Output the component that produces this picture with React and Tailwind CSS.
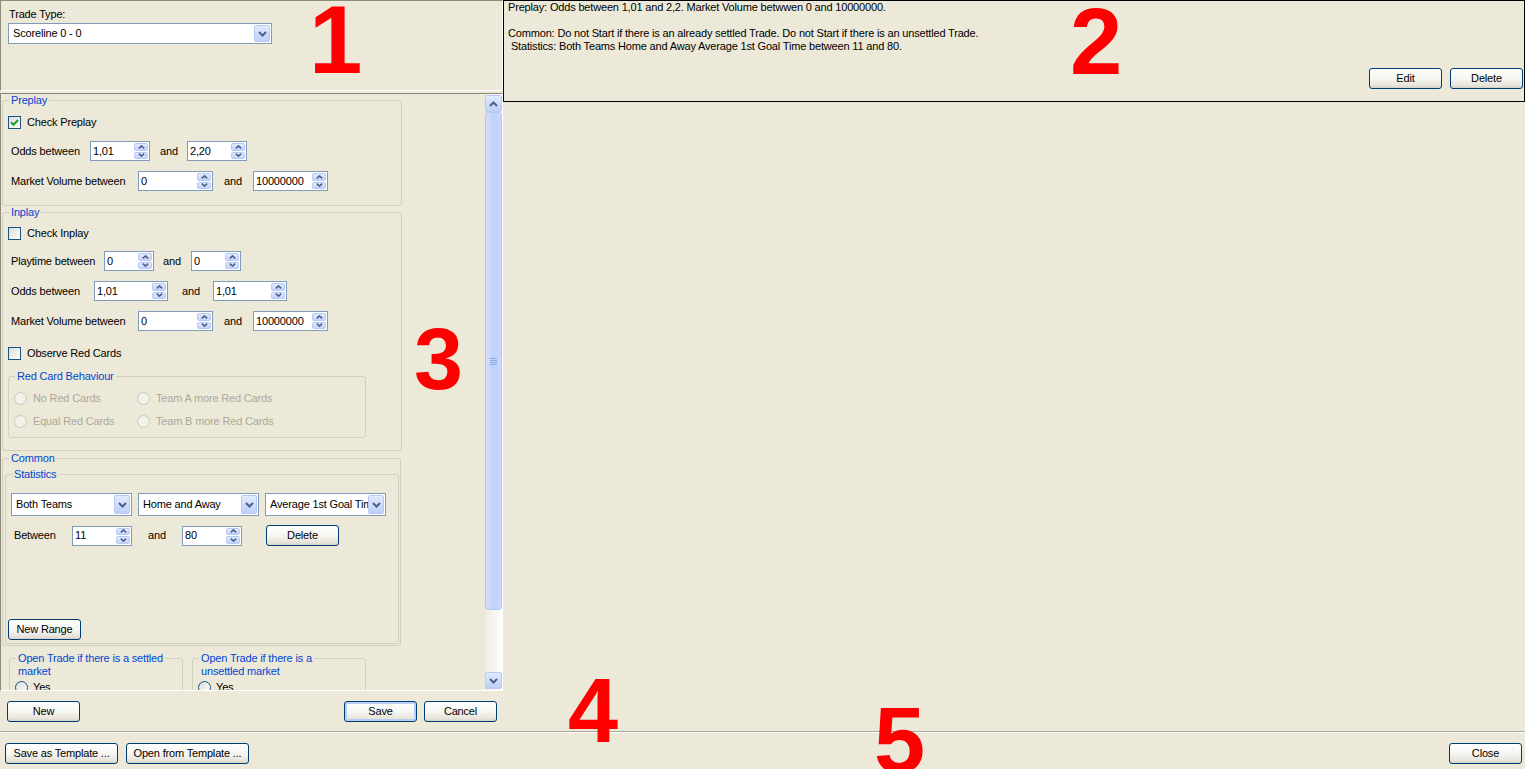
import React from "react";

function Chevron({ up = false }) {
  return (
    <svg width="9" height="6" viewBox="0 0 9 6" className="block">
      <path d={up ? "M1 5 L4.5 1.5 L8 5" : "M1 1 L4.5 4.5 L8 1"} fill="none" stroke="#4D6185" strokeWidth="2" />
    </svg>
  );
}

function SpinArrow({ up = false }) {
  return (
    <svg width="7" height="4" viewBox="0 0 7 4" className="block">
      <path d={up ? "M0.8 3.4 L3.5 0.9 L6.2 3.4" : "M0.8 0.6 L3.5 3.1 L6.2 0.6"} fill="none" stroke="#4D6185" strokeWidth="1.6" />
    </svg>
  );
}

function Spin({ value, className = "" }) {
  return (
    <div className={`flex h-[20px] border border-[#7F9DB9] bg-white ${className}`}>
      <span className="flex-1 min-w-0 pl-[2px] flex items-center overflow-hidden whitespace-nowrap">{value}</span>
      <div className="w-[16px] flex flex-col gap-[1px] p-[1px]">
        <div className="flex-1 rounded-[2px] border border-[#B7C9F6] bg-[linear-gradient(180deg,#E2EAFE,#C3D3FB)] flex items-center justify-center">
          <SpinArrow up />
        </div>
        <div className="flex-1 rounded-[2px] border border-[#B7C9F6] bg-[linear-gradient(180deg,#E2EAFE,#C3D3FB)] flex items-center justify-center">
          <SpinArrow />
        </div>
      </div>
    </div>
  );
}

function Combo({ text, className = "" }) {
  return (
    <div className={`flex border border-[#7F9DB9] bg-white p-[1px] ${className}`}>
      <span className="flex-1 min-w-0 pl-[3px] flex items-center overflow-hidden whitespace-nowrap">{text}</span>
      <div className="w-[16px] rounded-[2px] border border-[#B7C9F6] bg-[linear-gradient(180deg,#E2EAFE,#BDCFFA)] flex items-center justify-center">
        <Chevron />
      </div>
    </div>
  );
}

function Btn({ children, className = "", def = false }) {
  return (
    <button
      className={`h-[21px] rounded-[3px] border border-[#003C74] bg-[linear-gradient(180deg,#FFFFFF_0%,#F4F4F0_55%,#E6E3DA_88%,#D6D0C5_100%)] text-[11px] text-black flex items-center justify-center ${
        def ? "shadow-[inset_0_0_0_2px_#B9CDF8]" : ""
      } ${className}`}
    >
      {children}
    </button>
  );
}

function Check({ checked = false }) {
  return (
    <span className="w-[13px] h-[13px] border border-[#1C5180] bg-[linear-gradient(135deg,#DCDCD7,#FFFFFF)] flex items-center justify-center">
      {checked && (
        <svg width="9" height="9" viewBox="0 0 9 9">
          <path d="M1 4.3 L3.5 6.8 L8 2" fill="none" stroke="#21A121" strokeWidth="2" />
        </svg>
      )}
    </span>
  );
}

function Radio({ disabled = false }) {
  return disabled ? (
    <span className="w-[13px] h-[13px] rounded-full border border-[#CAC8BB] bg-[#F2F1EA]" />
  ) : (
    <span className="w-[13px] h-[13px] rounded-full border border-[#1C5180] bg-[linear-gradient(135deg,#DCDCD7,#FFFFFF)]" />
  );
}

function Group({ title, className = "", children }) {
  return (
    <fieldset className={`m-0 p-0 min-w-0 border border-[#D0D0BF] rounded-[3px] ${className}`}>
      <legend className="ml-[6px] px-[2px] leading-[13px] text-[#0046D5]">{title}</legend>
      {children}
    </fieldset>
  );
}

function ScrollArrow({ up = false }) {
  return (
    <div className="h-[17px] rounded-[2px] border border-[#B7C9F6] bg-[linear-gradient(180deg,#E2EAFE,#BDCFFA)] flex items-center justify-center">
      <Chevron up={up} />
    </div>
  );
}

export default function App() {
  return (
    <div className="relative w-[1525px] h-[769px] overflow-hidden bg-[#ECE9D8] font-['Liberation_Sans',Arial,sans-serif] text-[11px] leading-[13px] tracking-[-0.17px] text-black">
      <div className="flex h-[731px]">
        {/* left column */}
        <div className="w-[503px] flex flex-col">
          {/* panel 1 */}
          <div className="h-[91px] border border-t-[#8E8B7D] border-l-[#8E8B7D] border-b-white border-r-white">
            <div className="ml-[8px] mt-[7px] h-[13px]">Trade Type:</div>
            <Combo text="Scoreline 0 - 0" className="ml-[7px] mt-[2px] w-[264px] h-[21px]" />
          </div>

          {/* panel 3 */}
          <div className="h-[598px] mt-[2px] flex border border-t-[#8E8B7D] border-l-[#8E8B7D] border-b-white border-r-white">
            <div className="flex-1 overflow-hidden pl-[1px]">
              {/* Preplay */}
              <Group title="Preplay" className="w-[400px] pb-[14px]">
                <div className="mt-[5px] h-[20px] flex items-center pl-[5px]">
                  <Check checked />
                  <span className="ml-[6px]">Check Preplay</span>
                </div>
                <div className="mt-[9px] h-[20px] flex items-center pl-[8px]">
                  <span className="w-[79px]">Odds between</span>
                  <Spin value="1,01" className="w-[60px]" />
                  <span className="ml-[10px] w-[27px]">and</span>
                  <Spin value="2,20" className="w-[60px]" />
                </div>
                <div className="mt-[10px] h-[20px] flex items-center pl-[8px]">
                  <span className="w-[127px]">Market Volume between</span>
                  <Spin value="0" className="w-[75px]" />
                  <span className="ml-[11px] w-[29px]">and</span>
                  <Spin value="10000000" className="w-[75px]" />
                </div>
              </Group>

              {/* Inplay */}
              <Group title="Inplay" className="w-[400px] pb-[12px]">
                <div className="mt-[4px] h-[20px] flex items-center pl-[5px]">
                  <Check />
                  <span className="ml-[6px]">Check Inplay</span>
                </div>
                <div className="mt-[8px] h-[20px] flex items-center pl-[8px]">
                  <span className="w-[93px]">Playtime between</span>
                  <Spin value="0" className="w-[50px]" />
                  <span className="ml-[9px] w-[28px]">and</span>
                  <Spin value="0" className="w-[50px]" />
                </div>
                <div className="mt-[10px] h-[20px] flex items-center pl-[8px]">
                  <span className="w-[83px]">Odds between</span>
                  <Spin value="1,01" className="w-[74px]" />
                  <span className="ml-[14px] w-[31px]">and</span>
                  <Spin value="1,01" className="w-[74px]" />
                </div>
                <div className="mt-[10px] h-[20px] flex items-center pl-[8px]">
                  <span className="w-[127px]">Market Volume between</span>
                  <Spin value="0" className="w-[75px]" />
                  <span className="ml-[11px] w-[29px]">and</span>
                  <Spin value="10000000" className="w-[75px]" />
                </div>
                <div className="mt-[12px] h-[20px] flex items-center pl-[5px]">
                  <Check />
                  <span className="ml-[6px]">Observe Red Cards</span>
                </div>
                <Group title="Red Card Behaviour" className="ml-[5px] mt-[7px] w-[358px] pb-[6px]">
                  <div className="mt-[5px] h-[20px] flex items-center pl-[5px] text-[#ACA899]">
                    <div className="w-[123px] flex items-center">
                      <Radio disabled />
                      <span className="ml-[6px]">No Red Cards</span>
                    </div>
                    <Radio disabled />
                    <span className="ml-[6px]">Team A more Red Cards</span>
                  </div>
                  <div className="mt-[3px] h-[20px] flex items-center pl-[5px] text-[#ACA899]">
                    <div className="w-[123px] flex items-center">
                      <Radio disabled />
                      <span className="ml-[6px]">Equal Red Cards</span>
                    </div>
                    <Radio disabled />
                    <span className="ml-[6px]">Team B more Red Cards</span>
                  </div>
                </Group>
              </Group>

              {/* Common */}
              <Group title="Common" className="mt-[1px] w-[399px] pb-[1px]">
                <Group title="Statistics" className="ml-[2px] mt-[3px] w-[394px] pb-[3px]">
                  <div className="mt-[12px] h-[23px] flex pl-[5px]">
                    <Combo text="Both Teams" className="w-[121px] h-[23px]" />
                    <Combo text="Home and Away" className="ml-[6px] w-[121px] h-[23px]" />
                    <Combo text="Average 1st Goal Time" className="ml-[6px] w-[121px] h-[23px]" />
                  </div>
                  <div className="mt-[9px] h-[21px] flex items-center pl-[8px]">
                    <span className="w-[58px]">Between</span>
                    <Spin value="11" className="w-[60px]" />
                    <span className="ml-[16px] w-[34px]">and</span>
                    <Spin value="80" className="w-[60px]" />
                    <Btn className="ml-[24px] w-[73px]">Delete</Btn>
                  </div>
                  <div className="mt-[73px] pl-[2px]">
                    <Btn className="w-[73px]">New Range</Btn>
                  </div>
                </Group>
              </Group>

              {/* Open trade groups */}
              <div className="mt-[6px] flex">
                <Group title="Open Trade if there is a settled" className="ml-[7px] w-[174px] pb-[10px]">
                  <div className="pl-[8px] text-[#0046D5]">market</div>
                  <div className="mt-[1px] h-[16px] flex items-center pl-[5px]">
                    <Radio />
                    <span className="ml-[5px]">Yes</span>
                  </div>
                </Group>
                <Group title="Open Trade if there is a" className="ml-[9px] w-[174px] pb-[10px]">
                  <div className="pl-[8px] text-[#0046D5]">unsettled market</div>
                  <div className="mt-[1px] h-[16px] flex items-center pl-[5px]">
                    <Radio />
                    <span className="ml-[5px]">Yes</span>
                  </div>
                </Group>
              </div>
            </div>

            {/* scrollbar */}
            <div className="w-[17px] py-[1px] flex flex-col bg-[linear-gradient(90deg,#EEEDE5,#FEFEFB)]">
              <ScrollArrow up />
              <div className="flex-1">
                <div className="h-[498px] rounded-[3px] border border-[#B3C6F5] bg-[linear-gradient(90deg,#D3E0FD,#BFD1FA_50%,#C9D8FC)] flex items-center justify-center">
                  <div className="flex flex-col gap-[1px]">
                    <span className="block w-[7px] h-[1px] bg-[#8FA9E6]" />
                    <span className="block w-[7px] h-[1px] bg-[#8FA9E6]" />
                    <span className="block w-[7px] h-[1px] bg-[#8FA9E6]" />
                    <span className="block w-[7px] h-[1px] bg-[#8FA9E6]" />
                  </div>
                </div>
              </div>
              <ScrollArrow />
            </div>
          </div>

          {/* buttons row */}
          <div className="h-[40px] pt-[10px] pl-[7px] pr-[6px] flex items-start">
            <Btn className="w-[73px]">New</Btn>
            <div className="flex-1" />
            <Btn def className="w-[73px]">Save</Btn>
            <Btn className="ml-[7px] w-[73px]">Cancel</Btn>
          </div>
        </div>

        {/* right column */}
        <div className="flex-1">
          <div className="w-[1022px] h-[102px] border border-black flex flex-col pl-[4px]">
            <div>Preplay: Odds between 1,01 and 2,2. Market Volume betwwen 0 and 10000000.</div>
            <div>&nbsp;</div>
            <div>Common: Do not Start if there is an already settled Trade. Do not Start if there is an unsettled Trade.</div>
            <div>&nbsp;Statistics: Both Teams Home and Away Average 1st Goal Time between 11 and 80.</div>
            <div className="mt-auto pb-[12px] pr-[1px] flex justify-end gap-[8px]">
              <Btn className="w-[73px]">Edit</Btn>
              <Btn className="w-[73px]">Delete</Btn>
            </div>
          </div>
        </div>
      </div>

      {/* bottom bar */}
      <div className="h-[38px] border-t border-t-[#ACA899] flex flex-col">
        <div className="h-[1px] bg-white" />
        <div className="flex-1 pt-[10px] pl-[5px] pr-[3px] flex items-start">
          <Btn className="w-[113px]">Save as Template ...</Btn>
          <Btn className="ml-[8px] w-[123px]">Open from Template ...</Btn>
          <div className="flex-1" />
          <Btn className="w-[73px]">Close</Btn>
        </div>
      </div>

      {/* red annotation numbers */}
      <span className="absolute left-[309px] top-[-8px] text-[96px] font-bold leading-none tracking-normal text-[#FF0000]">1</span>
      <span className="absolute left-[1070px] top-[-5px] text-[94px] font-bold leading-none tracking-normal text-[#FF0000]">2</span>
      <span className="absolute left-[414px] top-[315px] text-[88px] font-bold leading-none tracking-normal text-[#FF0000]">3</span>
      <span className="absolute left-[568px] top-[666px] text-[90px] font-bold leading-none tracking-normal text-[#FF0000]">4</span>
      <span className="absolute left-[874px] top-[694px] text-[92px] font-bold leading-none tracking-normal text-[#FF0000]">5</span>
    </div>
  );
}
